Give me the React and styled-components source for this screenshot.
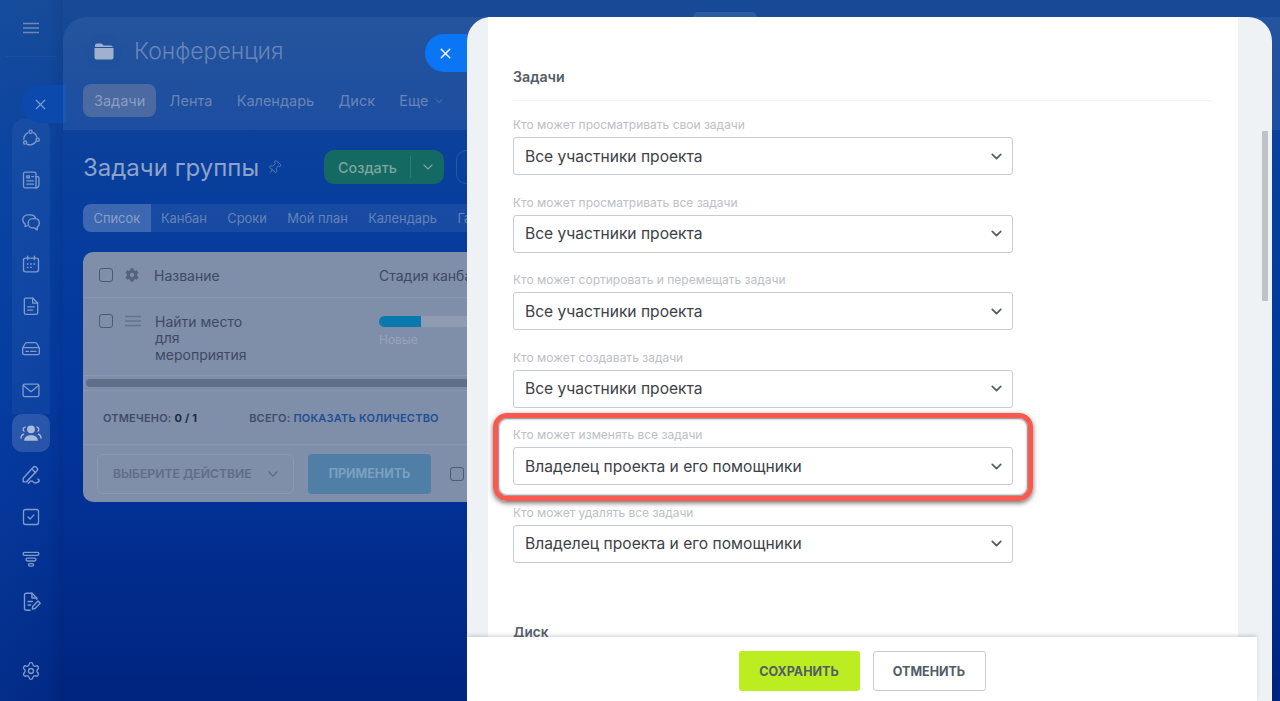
import React from "react";
import styled, { createGlobalStyle } from "styled-components";
import { Settings, X, ChevronDown, Pin } from "lucide-react";
import { FaCog } from "react-icons/fa";

const tasksFields = [
  { label: "Кто может просматривать свои задачи", value: "Все участники проекта" },
  { label: "Кто может просматривать все задачи", value: "Все участники проекта" },
  { label: "Кто может сортировать и перемещать задачи", value: "Все участники проекта" },
  { label: "Кто может создавать задачи", value: "Все участники проекта" },
  { label: "Кто может изменять все задачи", value: "Владелец проекта и его помощники", marked: true },
  { label: "Кто может удалять все задачи", value: "Владелец проекта и его помощники" },
];

const Icon = ({ children, size = 20 }) => (
  <svg width={size} height={size} viewBox="0 0 24 24" fill="none" stroke="currentColor" strokeWidth="1.6" strokeLinecap="round" strokeLinejoin="round">
    {children}
  </svg>
);

const railGroup = [
  <Icon>
    <circle cx="11.5" cy="4.5" r="1.9" />
    <circle cx="20" cy="14" r="1.900" />
    <circle cx="5" cy="17.5" r="1.900" />
    <path d="M8 5.800A9 9 0 0 0 3.400 13.500M15 5.500a9 9 0 0 1 4.200 5.400M7.600 19.600a9 9 0 0 0 10.400-3.600" />
  </Icon>,
  <Icon>
    <path d="M5 2.500h11a2 2 0 0 1 2 2V21.500H5a2 2 0 0 1-2-2v-15a2 2 0 0 1 2-2z" />
    <path d="M18 8h2a1.500 1.500 0 0 1 1.500 1.500V18a3.500 3.500 0 0 1-3.500 3.500" />
    <path d="M7 7h3v2.500H7zM13 8h2M7 13h8M7 17h8" />
  </Icon>,
  <Icon>
    <path d="M7.500 16.500l-2.500 1v-3A6.500 6.500 0 0 1 2 9.500 6 6 0 0 1 8 3.500h4a6 6 0 0 1 5.500 3.800" />
    <path d="M14 8h3a5.500 5.500 0 0 1 5 5.500 5.500 5.500 0 0 1-2.500 4.500v3.500L16 19h-2a5.500 5.500 0 0 1 0-11z" />
  </Icon>,
  <Icon>
    <rect x="3" y="5" width="18" height="16.500" rx="2.500" />
    <path d="M8 2.500V7M16 2.500V7M7.500 12h1M11.500 12h1M15.500 12h1M7.500 16h1M11.500 16h1" />
  </Icon>,
  <Icon>
    <path d="M6 2.500h8l6 6V20a2 2 0 0 1-2 2H6a2 2 0 0 1-2-2V4.500a2 2 0 0 1 2-2z" />
    <path d="M14 2.500V8.500h6M8 13h8M8 17h6" />
  </Icon>,
  <Icon>
    <path d="M7 5.500h10a2.500 2.500 0 0 1 2.200 1.400L22 12v6a2 2 0 0 1-2 2H4a2 2 0 0 1-2-2v-6l2.800-5.100A2.500 2.500 0 0 1 7 5.500z" />
    <path d="M2.500 11.500h19M6 16h3M11.500 16H18" />
  </Icon>,
  <Icon>
    <rect x="2.500" y="5" width="19" height="15" rx="2" />
    <path d="M3 6.500l9 7.500 9-7.500" />
  </Icon>,
];

const railRest = [
  <Icon size={22}>
    <path d="M3.500 15.500L14.500 3.500a2.200 2.200 0 0 1 3.200 0l.8.8a2.200 2.200 0 0 1 0 3.100L7 19.500H3.500z" />
    <path d="M13 5.500l4 4M9 21c2-2.500 4-3 5-1.800s3.500 2.300 6.800-.2a2 2 0 0 0-1.300-2.500" />
  </Icon>,
  <Icon>
    <rect x="3" y="3" width="18" height="18" rx="2.500" />
    <path d="M8.500 12l2.500 2.500 4.500-5" />
  </Icon>,
  <Icon>
    <rect x="2.500" y="4" width="19" height="3.600" rx="1.800" />
    <rect x="6" y="11" width="12" height="3.400" rx="1.700" />
    <rect x="9" y="17.500" width="6" height="3" rx="1.500" />
  </Icon>,
  <Icon size={21}>
    <path d="M18 9.500V8l-5.500-5.500H6a2 2 0 0 0-2 2V20a2 2 0 0 0 2 2h4.500" />
    <path d="M12.500 2.500V8H18M8 12h5M8 16h3" />
    <path d="M13 20.500l.5-3 6-6 2.500 2.500-6 6z" />
  </Icon>,
];

const UsersGlyph = () => (
  <svg width="22" height="22" viewBox="0 0 24 24" fill="currentColor">
    <circle cx="12" cy="8" r="4.300" />
    <path d="M4.500 20.500c0-3.800 3-6 7.500-6s7.500 2.200 7.500 6z" />
    <path d="M5.500 5.500a2.500 2.500 0 0 0-1 4.500M18.500 5.500a2.500 2.500 0 0 1 1 4.500M1 17.500c.3-2.200 1.500-3.800 3-4.300M23 17.500c-.3-2.200-1.500-3.800-3-4.300" fill="none" stroke="currentColor" strokeWidth="1.400" strokeLinecap="round" />
  </svg>
);

const FolderGlyph = () => (
  <svg width="20" height="17" viewBox="0 0 20 17" fill="currentColor">
    <path d="M1 2.500a2 2 0 0 1 2-2h4.500l2 2H17a2 2 0 0 1 1.800 1.500H1z" />
    <path d="M.5 5h19v9.500a2 2 0 0 1-2 2h-15a2 2 0 0 1-2-2z" />
  </svg>
);

const BurgerGlyph = () => (
  <svg width="16" height="12" viewBox="0 0 16 12" stroke="currentColor" strokeWidth="1.300">
    <path d="M0 1.500h16M0 6h16M0 10.500h16" />
  </svg>
);

const App = () => {
  return (
    <Page>
      <GlobalStyle />
      <Rail>
        <RailTop>
          <BurgerGlyph />
        </RailTop>
        <RailClose>
          <X size={17} strokeWidth={1.6} />
        </RailClose>
        <RailGroup>
          {railGroup.map((icon, i) => (
            <RailItem key={i}>{icon}</RailItem>
          ))}
        </RailGroup>
        <RailItem $active>
          <UsersGlyph />
        </RailItem>
        {railRest.map((icon, i) => (
          <RailItem key={i}>{icon}</RailItem>
        ))}
        <RailBottom>
          <Settings size={20} strokeWidth={1.6} />
        </RailBottom>
      </Rail>

      <Main>
        <TopNotch />
        <GroupHeader>
          <GroupTitleRow>
            <FolderBadge>
              <FolderGlyph />
            </FolderBadge>
            <GroupTitle>Конференция</GroupTitle>
          </GroupTitleRow>
          <Tabs>
            <Tab $active>Задачи</Tab>
            <Tab>Лента</Tab>
            <Tab>Календарь</Tab>
            <Tab>Диск</Tab>
            <Tab>
              Еще <ChevronDown size={12} strokeWidth={1.5} />
            </Tab>
          </Tabs>
        </GroupHeader>

        <Content>
          <ToolRow>
            <PageTitle>Задачи группы</PageTitle>
            <PinMark>
              <Pin size={15} strokeWidth={1.4} />
            </PinMark>
            <CreateButton>
              <CreateLabel>Создать</CreateLabel>
              <CreateArrow>
                <ChevronDown size={16} strokeWidth={1.6} />
              </CreateArrow>
            </CreateButton>
            <GhostButton />
          </ToolRow>

          <ViewTabs>
            <ViewTab $active>Список</ViewTab>
            <ViewTab>Канбан</ViewTab>
            <ViewTab>Сроки</ViewTab>
            <ViewTab>Мой план</ViewTab>
            <ViewTab>Календарь</ViewTab>
            <ViewTab>Гант</ViewTab>
          </ViewTabs>

          <TableCard>
            <HeadRow>
              <Box />
              <GearCell>
                <FaCog size={14} />
              </GearCell>
              <NameHead>Название</NameHead>
              <StageHead>Стадия канбана</StageHead>
            </HeadRow>
            <TaskRow>
              <Box />
              <MenuCell>
                <BurgerGlyph />
              </MenuCell>
              <TaskName>
                Найти место
                <br />
                для
                <br />
                мероприятия
              </TaskName>
              <Stage>
                <Progress>
                  <ProgressDone />
                </Progress>
                <StageName>Новые</StageName>
              </Stage>
            </TaskRow>
            <ScrollRow>
              <ScrollThumb />
            </ScrollRow>
            <SummaryRow>
              <Summary>
                ОТМЕЧЕНО: <b>0 / 1</b>
              </Summary>
              <Summary>
                ВСЕГО: <SummaryLink>ПОКАЗАТЬ КОЛИЧЕСТВО</SummaryLink>
              </Summary>
            </SummaryRow>
            <ActionRow>
              <ActionSelect>
                ВЫБЕРИТЕ ДЕЙСТВИЕ
                <ChevronDown size={16} strokeWidth={2} />
              </ActionSelect>
              <ApplyButton>ПРИМЕНИТЬ</ApplyButton>
              <Box />
            </ActionRow>
          </TableCard>
        </Content>
      </Main>

      <Slider>
        <SliderClose>
          <X size={17} strokeWidth={2} />
        </SliderClose>
        <ScrollArea>
          <Sheet>
            <SectionTitle>Задачи</SectionTitle>
            <Fields>
              {tasksFields.map((field) => (
                <Field key={field.label}>
                  {field.marked && <Marker />}
                  <FieldLabel>{field.label}</FieldLabel>
                  <SelectBox>
                    {field.value}
                    <ChevronDown size={17} strokeWidth={2.4} />
                  </SelectBox>
                </Field>
              ))}
            </Fields>
            <NextTitle>Диск</NextTitle>
          </Sheet>
        </ScrollArea>
        <Footer>
          <SaveButton>СОХРАНИТЬ</SaveButton>
          <CancelButton>ОТМЕНИТЬ</CancelButton>
        </Footer>
        <SliderThumb />
      </Slider>
    </Page>
  );
};

export default App;

const GlobalStyle = createGlobalStyle`
  html, body {
    margin: 0;
    padding: 0;
    overflow: hidden;
  }
  * {
    box-sizing: border-box;
  }
  body {
    font-family: Inter, "Liberation Sans", sans-serif;
  }
`;

const Page = styled.div`
  position: relative;
  display: flex;
  width: 1280px;
  height: 701px;
  overflow: hidden;
  background: linear-gradient(180deg, #174a96 0%, #134698 8%, #083f9d 25%, #02379c 55%, #022f92 75%, #00247f 100%);
`;

const Rail = styled.div`
  position: relative;
  display: flex;
  flex-direction: column;
  flex: 0 0 63px;
  padding-left: 12px;
  padding-right: 13px;
  color: #7f9bc8;
  background: linear-gradient(90deg, rgba(20, 90, 180, 0.18), rgba(20, 90, 180, 0.1) 75%, rgba(10, 30, 90, 0.1));
`;

const RailTop = styled.div`
  display: flex;
  align-items: center;
  justify-content: center;
  height: 57px;
  margin: 0 -6px 62px;
  color: #6b88ba;
  border-bottom: 1px solid rgba(130, 160, 210, 0.08);
`;

const RailClose = styled.div`
  position: absolute;
  left: 22px;
  top: 85px;
  width: 44px;
  height: 38px;
  display: flex;
  align-items: center;
  padding-left: 10px;
  color: #7d9fd6;
  background: #0b4aac;
  border-radius: 19px 0 0 19px;
`;

const RailGroup = styled.div`
  display: flex;
  flex-direction: column;
  gap: 4px;
  padding-bottom: 5px;
  border-radius: 12px 12px 0 0;
  background: rgba(255, 255, 255, 0.045);
`;

const RailItem = styled.div`
  display: flex;
  align-items: center;
  justify-content: center;
  flex: 0 0 38px;
  height: 38px;
  margin-bottom: 4px;
  border-radius: 10px;
  color: ${(p) => (p.$active ? "#a9bcdc" : "#7f9bc8")};
  background: ${(p) => (p.$active ? "rgba(255, 255, 255, 0.15)" : "transparent")};

  ${RailGroup} & {
    margin-bottom: 0;
  }
`;

const RailBottom = styled.div`
  display: flex;
  align-items: center;
  justify-content: center;
  margin-top: auto;
  height: 38px;
  margin-bottom: 11px;
`;

const Main = styled.div`
  position: relative;
  flex: 1;
  margin-top: 17px;
  min-width: 0;
`;

const TopNotch = styled.div`
  position: absolute;
  left: 630px;
  top: -5px;
  width: 64px;
  height: 5px;
  border-radius: 8px 8px 0 0;
  background: rgba(255, 255, 255, 0.1);
`;

const GroupHeader = styled.div`
  height: 113px;
  padding: 16px 20px 0 20px;
  border-radius: 24px 0 0 0;
  background: rgba(255, 255, 255, 0.065);
`;

const GroupTitleRow = styled.div`
  display: flex;
  align-items: center;
  height: 37px;
  margin-left: 2px;
`;

const FolderBadge = styled.div`
  display: flex;
  align-items: center;
  justify-content: center;
  width: 37px;
  height: 37px;
  border-radius: 50%;
  color: #a0b1d0;
  background: rgba(30, 80, 150, 0.18);
`;

const GroupTitle = styled.div`
  margin-left: 12px;
  margin-top: -2px;
  font-size: 23px;
  font-weight: 300;
  color: #6785b6;
`;

const Tabs = styled.div`
  display: flex;
  gap: 2.300px;
  margin-top: 14px;
`;

const Tab = styled.div`
  display: flex;
  align-items: center;
  gap: 4px;
  height: 33px;
  padding: 0 11px;
  border-radius: 8px;
  font-size: 14.500px;
  color: ${(p) => (p.$active ? "#8a9dc3" : "#6a84b5")};
  background: ${(p) => (p.$active ? "#4b6aa2" : "transparent")};
`;

const Content = styled.div`
  padding: 0 20px;
`;

const ToolRow = styled.div`
  display: flex;
  align-items: center;
  height: 34px;
  margin-top: 20px;
`;

const PageTitle = styled.div`
  font-size: 24px;
  font-weight: 400;
  color: #8ea3c8;
`;

const PinMark = styled.div`
  display: flex;
  margin-left: 8px;
  color: #5f7fb4;
  transform: rotate(40deg);
`;

const CreateButton = styled.div`
  display: flex;
  align-items: center;
  width: 120px;
  height: 34px;
  margin-left: 42px;
  border-radius: 10px;
  background: #146a62;
  color: #7fa5a0;
`;

const CreateLabel = styled.div`
  flex: 1;
  padding-left: 14px;
  font-size: 14.300px;
  font-weight: 500;
`;

const CreateArrow = styled.div`
  display: flex;
  align-items: center;
  justify-content: center;
  width: 34px;
  height: 22px;
  border-left: 1px solid rgba(130, 170, 165, 0.25);
`;

const GhostButton = styled.div`
  flex: 0 0 80px;
  height: 34px;
  margin-left: 12px;
  border: 1px solid rgba(130, 160, 210, 0.25);
  border-radius: 10px;
`;

const ViewTabs = styled.div`
  display: flex;
  height: 28px;
  margin-top: 20px;
  border-radius: 8px;
  background: rgba(255, 255, 255, 0.07);
`;

const ViewTab = styled.div`
  display: flex;
  align-items: center;
  padding: 0 ${(p) => (p.$active ? "10.500px" : "10.200px")};
  font-size: 12.900px;
  color: ${(p) => (p.$active ? "#88a0c8" : "#6683b6")};
  background: ${(p) => (p.$active ? "rgba(255, 255, 255, 0.16)" : "transparent")};
  border-radius: ${(p) => (p.$active ? "8px 0 0 8px" : "0")};
`;

const TableCard = styled.div`
  height: 250px;
  margin-top: 20px;
  border-radius: 10px;
  background: #7f8ea9;
  color: #3e4a63;
`;

const Box = styled.div`
  flex: 0 0 14px;
  width: 14px;
  height: 14px;
  border: 1.300px solid #4d5a72;
  border-radius: 3px;
`;

const HeadRow = styled.div`
  display: flex;
  align-items: center;
  height: 46px;
  padding: 1px 0 0 16px;
  font-size: 14px;
  border-bottom: 1px solid #8896af;
`;

const GearCell = styled.div`
  display: flex;
  margin-left: 12px;
  width: 29px;
  color: #56637c;
`;

const NameHead = styled.div`
  width: 225px;
`;

const StageHead = styled.div``;

const TaskRow = styled.div`
  display: flex;
  align-items: flex-start;
  height: 78px;
  padding: 15.500px 0 0 16px;
  border-bottom: 1px solid #8896af;
`;

const MenuCell = styled.div`
  display: flex;
  align-items: center;
  width: 30px;
  height: 14px;
  margin-left: 12px;
  color: #66738c;
`;

const TaskName = styled.div`
  width: 224px;
  font-size: 14px;
  line-height: 16.500px;
`;

const Stage = styled.div`
  flex: 1;
  margin-top: 2px;
`;

const Progress = styled.div`
  width: 100%;
  height: 11px;
  border-radius: 6px 0 0 6px;
  background: #8e9bb2;
  overflow: hidden;
`;

const ProgressDone = styled.div`
  width: 42px;
  height: 100%;
  background: #0a79ad;
`;

const StageName = styled.div`
  margin-top: 5px;
  font-size: 12px;
  color: #98a4ba;
`;

const ScrollRow = styled.div`
  height: 15px;
  padding: 3px 3px 0;
  border-bottom: 1px solid #8896af;
`;

const ScrollThumb = styled.div`
  height: 8px;
  border-radius: 4px;
  background: #5f6f87;
`;

const SummaryRow = styled.div`
  display: flex;
  align-items: center;
  height: 54px;
  padding-left: 20px;
  gap: 52px;
  border-bottom: 1px solid #8896af;
`;

const Summary = styled.div`
  font-size: 11px;
  font-weight: 600;
  letter-spacing: 0.2px;
  color: #3f4c68;

  b {
    font-weight: 700;
    color: #1f2a44;
  }
`;

const SummaryLink = styled.span`
  color: #1d4f92;
`;

const ActionRow = styled.div`
  display: flex;
  align-items: center;
  height: 57px;
  padding-left: 14px;
`;

const ActionSelect = styled.div`
  display: flex;
  align-items: center;
  justify-content: space-between;
  width: 197px;
  height: 40px;
  padding: 0 12px 0 15px;
  font-size: 12.200px;
  font-weight: 600;
  color: #5f6d88;
  border: 1px solid #8c99b2;
  border-radius: 6px;
`;

const ApplyButton = styled.div`
  display: flex;
  align-items: center;
  justify-content: center;
  width: 123px;
  height: 40px;
  margin: 0 19px 0 14px;
  border-radius: 4px;
  font-size: 12.500px;
  font-weight: 700;
  color: #7ba0bf;
  background: #4f7fa6;
`;

const Slider = styled.div`
  position: absolute;
  left: 467px;
  top: 17px;
  right: 8px;
  bottom: 0;
  display: flex;
  flex-direction: column;
  border-radius: 24px 24px 0 0;
  background: #eef2f5;
`;

const SliderClose = styled.div`
  position: absolute;
  left: -42px;
  top: 17px;
  display: flex;
  align-items: center;
  justify-content: center;
  width: 42px;
  height: 38px;
  padding-right: 2px;
  color: #fff;
  background: #0a76f5;
  border-radius: 19px 0 0 19px;
`;

const ScrollArea = styled.div`
  flex: 1;
  min-height: 0;
  overflow: hidden;
  padding: 0 34px 0 21px;
`;

const Sheet = styled.div`
  height: 100%;
  padding: 50px 26px 0 25px;
  background: #fff;
`;

const SectionTitle = styled.div`
  height: 34px;
  font-size: 14.200px;
  line-height: 20px;
  font-weight: 600;
  color: #535c69;
  border-bottom: 1px solid #f0f1f3;
`;

const Fields = styled.div`
  display: flex;
  flex-direction: column;
  gap: 20.500px;
  padding-top: 17px;
`;

const Field = styled.div`
  position: relative;
  width: 500px;
`;

const FieldLabel = styled.div`
  height: 14px;
  margin-bottom: 5px;
  font-size: 12px;
  line-height: 14px;
  color: #bcc0c6;
`;

const SelectBox = styled.div`
  display: flex;
  align-items: center;
  justify-content: space-between;
  height: 38px;
  padding: 0 7px 0 11px;
  font-size: 15.600px;
  color: #3d4148;
  background: #fff;
  border: 1px solid #c6cdd3;
  border-radius: 3px;

  svg {
    color: #535c69;
  }
`;

const Marker = styled.div`
  position: absolute;
  top: -15px;
  left: -20px;
  right: -20px;
  bottom: -16px;
  border: 5px solid #f9594f;
  border-radius: 14px;
  box-shadow: 0 2px 5px rgba(30, 30, 30, 0.65), inset 0 0 2px 1px rgba(40, 40, 40, 0.6);
  pointer-events: none;
`;

const NextTitle = styled.div`
  margin-top: 59.500px;
  font-size: 13.500px;
  line-height: 20px;
  font-weight: 600;
  color: #535c69;
`;

const Footer = styled.div`
  position: relative;
  display: flex;
  justify-content: center;
  gap: 13px;
  flex: 0 0 64px;
  margin-right: 15px;
  padding-top: 14px;
  background: #fff;
  box-shadow: 0 -2px 3px rgba(90, 100, 110, 0.22);
`;

const SaveButton = styled.div`
  display: flex;
  align-items: center;
  justify-content: center;
  width: 121px;
  height: 40px;
  border-radius: 3px;
  font-size: 12.500px;
  font-weight: 700;
  color: #535c69;
  background: #bbed21;
`;

const CancelButton = styled(SaveButton)`
  width: 113px;
  background: #fff;
  border: 1px solid #c6cdd3;
`;

const SliderThumb = styled.div`
  position: absolute;
  top: 114px;
  right: 4px;
  width: 6px;
  height: 170px;
  background: #bfc3c5;
`;
